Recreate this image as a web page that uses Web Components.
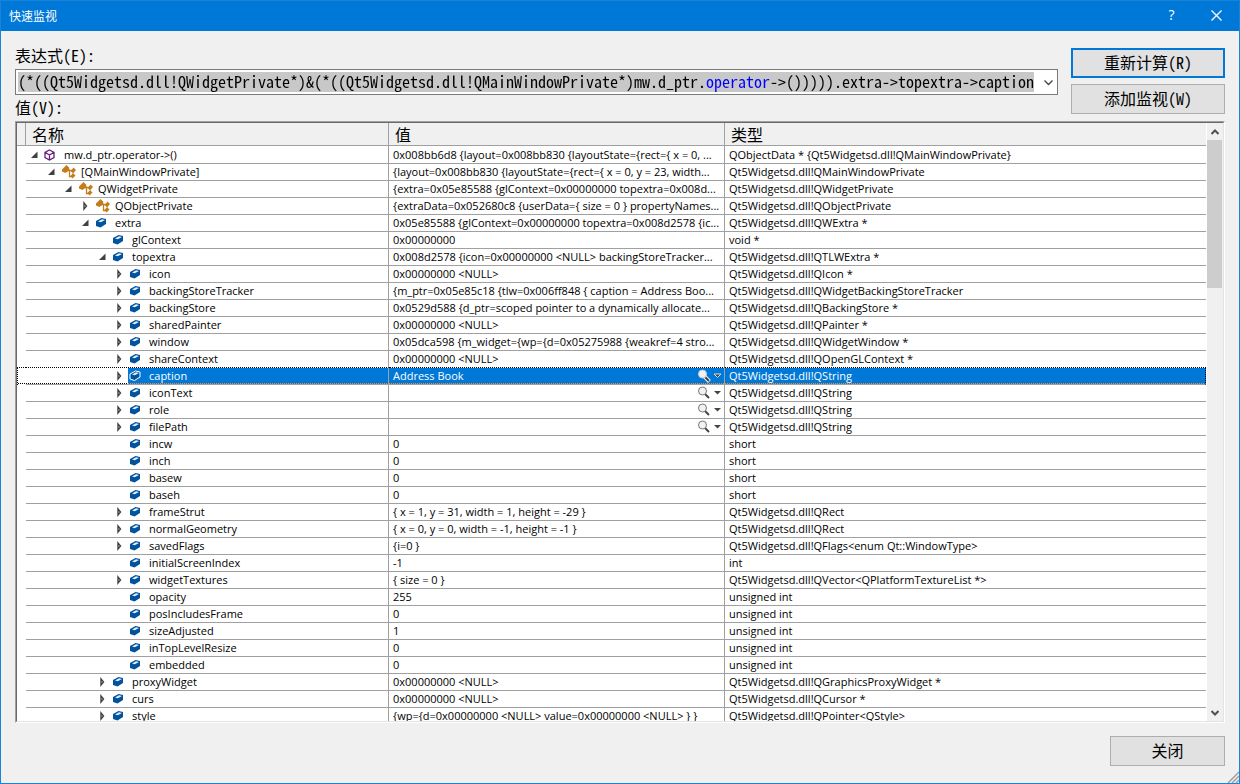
<!DOCTYPE html>
<html lang="zh-CN">
<head>
<meta charset="utf-8">
<title>快速监视</title>
<style>
    body {
        margin: 0;
        font: 16px/20px "Noto Sans Mono CJK SC", "Noto Sans CJK SC", monospace;
        color: #000;
    }
</style>
</head>
<body>
<watch-dialog></watch-dialog>
<script>
const ROWS = [
    // level, expander (open / closed / none), icon, name, value, type, has visualizer
    [0, 'open', 'object', 'mw.d_ptr.operator->()', '0x008bb6d8 {layout=0x008bb830 {layoutState={rect={ x = 0, ...', 'QObjectData * {Qt5Widgetsd.dll!QMainWindowPrivate}'],
    [1, 'open', 'class', '[QMainWindowPrivate]', '{layout=0x008bb830 {layoutState={rect={ x = 0, y = 23, width...', 'Qt5Widgetsd.dll!QMainWindowPrivate'],
    [2, 'open', 'class', 'QWidgetPrivate', '{extra=0x05e85588 {glContext=0x00000000 topextra=0x008d...', 'Qt5Widgetsd.dll!QWidgetPrivate'],
    [3, 'closed', 'class', 'QObjectPrivate', '{extraData=0x052680c8 {userData={ size = 0 } propertyNames...', 'Qt5Widgetsd.dll!QObjectPrivate'],
    [3, 'open', 'field', 'extra', '0x05e85588 {glContext=0x00000000 topextra=0x008d2578 {ic...', 'Qt5Widgetsd.dll!QWExtra *'],
    [4, '', 'field', 'glContext', '0x00000000', 'void *'],
    [4, 'open', 'field', 'topextra', '0x008d2578 {icon=0x00000000 <NULL> backingStoreTracker...', 'Qt5Widgetsd.dll!QTLWExtra *'],
    [5, 'closed', 'field', 'icon', '0x00000000 <NULL>', 'Qt5Widgetsd.dll!QIcon *'],
    [5, 'closed', 'field', 'backingStoreTracker', '{m_ptr=0x05e85c18 {tlw=0x006ff848 { caption = Address Boo...', 'Qt5Widgetsd.dll!QWidgetBackingStoreTracker'],
    [5, 'closed', 'field', 'backingStore', '0x0529d588 {d_ptr=scoped pointer to a dynamically allocate...', 'Qt5Widgetsd.dll!QBackingStore *'],
    [5, 'closed', 'field', 'sharedPainter', '0x00000000 <NULL>', 'Qt5Widgetsd.dll!QPainter *'],
    [5, 'closed', 'field', 'window', '0x05dca598 {m_widget={wp={d=0x05275988 {weakref=4 stro...', 'Qt5Widgetsd.dll!QWidgetWindow *'],
    [5, 'closed', 'field', 'shareContext', '0x00000000 <NULL>', 'Qt5Widgetsd.dll!QOpenGLContext *'],
    [5, 'closed', 'field', 'caption', 'Address Book', 'Qt5Widgetsd.dll!QString', true],
    [5, 'closed', 'field', 'iconText', '', 'Qt5Widgetsd.dll!QString', true],
    [5, 'closed', 'field', 'role', '', 'Qt5Widgetsd.dll!QString', true],
    [5, 'closed', 'field', 'filePath', '', 'Qt5Widgetsd.dll!QString', true],
    [5, '', 'field', 'incw', '0', 'short'],
    [5, '', 'field', 'inch', '0', 'short'],
    [5, '', 'field', 'basew', '0', 'short'],
    [5, '', 'field', 'baseh', '0', 'short'],
    [5, 'closed', 'field', 'frameStrut', '{ x = 1, y = 31, width = 1, height = -29 }', 'Qt5Widgetsd.dll!QRect'],
    [5, 'closed', 'field', 'normalGeometry', '{ x = 0, y = 0, width = -1, height = -1 }', 'Qt5Widgetsd.dll!QRect'],
    [5, 'closed', 'field', 'savedFlags', '{i=0 }', 'Qt5Widgetsd.dll!QFlags<enum Qt::WindowType>'],
    [5, '', 'field', 'initialScreenIndex', '-1', 'int'],
    [5, 'closed', 'field', 'widgetTextures', '{ size = 0 }', 'Qt5Widgetsd.dll!QVector<QPlatformTextureList *>'],
    [5, '', 'field', 'opacity', '255', 'unsigned int'],
    [5, '', 'field', 'posIncludesFrame', '0', 'unsigned int'],
    [5, '', 'field', 'sizeAdjusted', '1', 'unsigned int'],
    [5, '', 'field', 'inTopLevelResize', '0', 'unsigned int'],
    [5, '', 'field', 'embedded', '0', 'unsigned int'],
    [4, 'closed', 'field', 'proxyWidget', '0x00000000 <NULL>', 'Qt5Widgetsd.dll!QGraphicsProxyWidget *'],
    [4, 'closed', 'field', 'curs', '0x00000000 <NULL>', 'Qt5Widgetsd.dll!QCursor *'],
    [4, 'closed', 'field', 'style', '{wp={d=0x00000000 <NULL> value=0x00000000 <NULL> } }', 'Qt5Widgetsd.dll!QPointer<QStyle>']
];
const SELECTED = 'caption';

const ICONS = {
    object: '<path d="M6.500 3 11 5.300v5.200l-4.500 2.500L2 10.500V5.300z M2 5.300l4.500 2.700L11 5.300 M6.500 8v5" fill="none" stroke="#68217a" stroke-width="1.300"/>',
    class: '<path d="M2 5.500 6.500 1 9 3.500 9.500 6 5.500 9 2 7.500z" fill="#c27d1a"/><path d="M7 6.500h5 M9.500 6.500v6h3" fill="none" stroke="#c27d1a" stroke-width="1.300"/><path d="M13.500 3.500 16 6l-3 3.500L10.800 7z M13 9l2.500 2.500-3 3L10.500 12z" fill="#c27d1a"/>',
    field: '<path class="edge" d="M2 6 7.500 3 12 4v5l-5.500 3.500L2 11z" fill="#00539c"/><path d="M4 6.500 8 4.200l3 .8-4.200 2.300z" fill="#e6eef6"/>',
    open: '<path d="M10.500 4.500v6.500H4z" fill="#404040"/>',
    closed: '<path d="M6 5v6l2.500-3z" fill="#fff" stroke="#404040" stroke-width="1.400"/>',
    search: '<path class="halo" d="M7.500 8.500l5 5" stroke="none" stroke-width="4"/><path d="M7.500 8.500l4.500 4.500" stroke="#444" stroke-width="2"/><circle class="lens" cx="5.500" cy="6" r="4" fill="#f2f2f2" stroke="#777"/>',
    drop: '<path class="arrow" d="M1 6h7L4.500 9.500z" fill="#444"/>'
};

class WatchIcon extends HTMLElement {
    constructor() {
        super();
        this.attachShadow({ mode: 'open' });
    }

    connectedCallback() {
        const name = this.getAttribute('name');
        const width = name === 'drop' ? 9 : 16;
        this.shadowRoot.innerHTML = `
            <style>
                :host { display: block; flex: none; height: 16px; white-space: normal; }
                svg { display: block; }
                :host([selected]) .edge { stroke: #fff; }
                :host([selected]) .arrow { stroke: #ddd; }
                :host([selected]) .halo { stroke: #f2f2f2; }
                :host([selected]) .lens { stroke: #ccc; }
            </style>
            <svg width="${width}" height="16" viewBox="0 0 ${width} 16" aria-hidden="true">${ICONS[name]}</svg>
        `;
    }
}

class TitleBar extends HTMLElement {
    constructor() {
        super();
        this.attachShadow({ mode: 'open' }).innerHTML = `
            <style>
                :host {
                    display: flex;
                    align-items: center;
                    height: 30px;
                    padding-left: 8px;
                    background: #0078d7;
                    color: #fff;
                    font: 12px/16px "Noto Sans CJK SC", sans-serif;
                }
                h1 { flex: 1; margin: 0; font: inherit; }
                button {
                    display: flex;
                    align-items: center;
                    justify-content: center;
                    width: 45px;
                    height: 30px;
                    padding: 0 0 2px;
                    border: 0;
                    background: none;
                    color: inherit;
                    font: 14px/16px "Open Sans", sans-serif;
                }
            </style>
            <h1><slot></slot></h1>
            <button>?</button>
            <button aria-label="关闭">
                <svg width="11" height="11" viewBox="0 0 11 11"><path d="M.5.5l10 10M10.500.5l-10 10" stroke="#fff" stroke-width="1.300" fill="none"/></svg>
            </button>
        `;
    }
}

class DialogButton extends HTMLElement {
    constructor() {
        super();
        this.attachShadow({ mode: 'open' }).innerHTML = `
            <style>
                :host { display: block; }
                button {
                    display: block;
                    width: 100%;
                    height: 30px;
                    padding: 0 0 2px;
                    border: 1px solid #adadad;
                    background: #e1e1e1;
                    color: inherit;
                    font: inherit;
                }
                :host([default]) button { border: 2px solid #0078d7; }
            </style>
            <button><slot></slot></button>
        `;
    }
}

class ExpressionBox extends HTMLElement {
    constructor() {
        super();
        this.attachShadow({ mode: 'open' });
    }

    connectedCallback() {
        const value = this.getAttribute('value');
        const start = value.indexOf('operator');
        // the keyword is coloured by a gradient that is clipped to the text
        this.shadowRoot.innerHTML = `
            <style>
                :host { display: flex; flex-direction: column; gap: 4px; }
                .box {
                    display: flex;
                    height: 24px;
                    border: 1px solid #7a7a7a;
                    background: #fff;
                }
                input {
                    flex: 1;
                    min-width: 0;
                    margin: 2px 0 2px 2px;
                    padding: 0 0 2px;
                    border: 0;
                    outline: 0;
                    color: #000;
                    font: inherit;
                    line-height: 18px;
                    -webkit-text-fill-color: transparent;
                    background:
                        linear-gradient(90deg, #000 ${start}ch, #00f ${start}ch ${start + 8}ch, #000 ${start + 8}ch) text,
                        linear-gradient(#c8c8c8, #c8c8c8) 0 0 / ${value.length}ch 100% no-repeat;
                }
                button {
                    display: flex;
                    align-items: center;
                    justify-content: center;
                    width: 17px;
                    padding: 2px 0 0;
                    border: 0;
                    background: none;
                }
            </style>
            <label for="expr"><slot></slot></label>
            <div class="box">
                <input id="expr" type="text" spellcheck="false">
                <button aria-label="历史记录">
                    <svg width="9" height="6" viewBox="0 0 9 6"><path d="M.5.5l4 4 4-4" stroke="#444" stroke-width="1.300" fill="none"/></svg>
                </button>
            </div>
        `;
        this.shadowRoot.querySelector('input').value = value;
    }
}

class GridScrollbar extends HTMLElement {
    constructor() {
        super();
        this.attachShadow({ mode: 'open' }).innerHTML = `
            <style>
                :host {
                    display: flex;
                    flex-direction: column;
                    width: 16px;
                    background: #f0f0f0;
                }
                button {
                    display: flex;
                    align-items: center;
                    justify-content: center;
                    height: 17px;
                    width: 15px;
                    padding: 0;
                    border: 0;
                    background: none;
                }
                .track { flex: 1; }
                .thumb { width: 15px; height: 148px; background: #cdcdcd; }
            </style>
            <button aria-label="向上">
                <svg width="8" height="6" viewBox="0 0 8 6"><path d="M.5 5 4 1.500 7.500 5" stroke="#505050" stroke-width="2" fill="none"/></svg>
            </button>
            <div class="track"><div class="thumb"></div></div>
            <button aria-label="向下">
                <svg width="8" height="6" viewBox="0 0 8 6"><path d="M.5 1 4 4.500 7.500 1" stroke="#505050" stroke-width="2" fill="none"/></svg>
            </button>
        `;
    }
}

class WatchGrid extends HTMLElement {
    constructor() {
        super();
        this.attachShadow({ mode: 'open' });
    }

    escape(text) {
        return text.replace(/&/g, '&amp;').replace(/</g, '&lt;').replace(/>/g, '&gt;');
    }

    row([level, state, icon, name, value, type, visualizer]) {
        const sel = name === SELECTED ? 'selected' : '';
        const expander = state
            ? `<button aria-label="${state === 'open' ? '折叠' : '展开'}"><watch-icon name="${state}"></watch-icon></button>`
            : '';
        const tools = visualizer
            ? `<button aria-label="查看"><watch-icon name="search" ${sel}></watch-icon></button><button aria-label="选项"><watch-icon name="drop" ${sel}></watch-icon></button>`
            : '';
        return `
            <tr class="${sel}">
                <td class="gutter"></td>
                <td class="name"><div class="cell">
                    <span class="tree" style="--level: ${level}">${expander}</span>
                    <span class="label"><watch-icon name="${icon}" ${sel}></watch-icon>${this.escape(name)}</span>
                </div></td>
                <td class="value"><div class="cell"><span class="text">${this.escape(value)}</span>${tools}</div></td>
                <td class="type"><div class="cell"><span class="text">${this.escape(type)}</span></div></td>
            </tr>`;
    }

    connectedCallback() {
        this.shadowRoot.innerHTML = `
            <style>
                :host {
                    display: block;
                    min-height: 0;
                    border: 1px solid #a0a0a0;
                    border-color: #a0a0a0 #fff #fff #a0a0a0;
                }
                .frame {
                    display: flex;
                    gap: 1px;
                    box-sizing: border-box;
                    height: 100%;
                    border: 1px solid;
                    border-color: #696969 #e3e3e3 #e3e3e3 #696969;
                    background: #fff;
                }
                .view { flex: 1; min-width: 0; overflow: hidden; }
                table {
                    width: 100%;
                    table-layout: fixed;
                    border-collapse: separate;
                    border-spacing: 0;
                }
                th, td { padding: 0; }
                th {
                    box-sizing: border-box;
                    height: 23px;
                    padding-left: 6px;
                    border-right: 1px solid #a0a0a0;
                    border-bottom: 1px solid #a0a0a0;
                    background: #f0f0f0;
                    font-weight: normal;
                    line-height: 22px;
                    text-align: left;
                }
                th:last-child { border-right: 0; }
                .c-gutter { width: 9px; }
                .c-name { width: 363px; }
                .c-value { width: 336px; }
                td { --dot: #000; }
                td:not(.gutter) { border-bottom: 1px solid #a0a0a0; }
                .name, .value { border-right: 1px solid #a0a0a0; }
                tbody tr:first-child .cell { padding-top: 1px; }
                .cell {
                    display: flex;
                    height: 16px;
                    font: 11px/16px "Open Sans", sans-serif;
                    white-space: pre;
                }
                .tree {
                    display: flex;
                    flex: none;
                    justify-content: flex-end;
                    width: calc(var(--level) * 17px + 17px);
                }
                .label { display: flex; flex: 1; gap: 5px; }
                .text { flex: 1; min-width: 0; padding-left: 4px; overflow: hidden; }
                button {
                    flex: none;
                    padding: 0;
                    border: 0;
                    background: none;
                }
                .value button:last-child { margin: 0 2px 0 0; }
                .selected .label, .selected .value, .selected .type {
                    --dot: #ff8728;
                    background-color: #0078d7;
                    color: #fff;
                }
                .selected .gutter, .selected .tree, .selected .label, .selected .value, .selected .type {
                    background-image: repeating-linear-gradient(90deg, var(--dot) 0 1px, transparent 1px 2px);
                    background-repeat: no-repeat;
                    background-position: 0 15px;
                    background-size: 100% 1px;
                }
                .selected .gutter { border-left: 1px dotted #000; }
                .selected .type { border-right: 1px dotted #000; }
                tr:has(+ .selected) td { border-bottom: 1px dotted #000; }
            </style>
            <div class="frame">
                <div class="view">
                    <table aria-label="值">
                        <colgroup><col class="c-gutter"><col class="c-name"><col class="c-value"><col></colgroup>
                        <thead><tr><th></th><th>名称</th><th>值</th><th>类型</th></tr></thead>
                        <tbody>${ROWS.map(r => this.row(r).replace(/>\s+</g, '><')).join('')}</tbody>
                    </table>
                </div>
                <grid-scrollbar></grid-scrollbar>
            </div>
        `;
    }
}

class WatchDialog extends HTMLElement {
    constructor() {
        super();
        this.attachShadow({ mode: 'open' }).innerHTML = `
            <style>
                :host {
                    display: flex;
                    flex-direction: column;
                    position: relative;
                    box-sizing: border-box;
                    height: 100vh;
                    border: 1px solid #1883d7;
                    background: #f0f0f0;
                }
                main {
                    display: flex;
                    flex: 1;
                    flex-direction: column;
                    gap: 4px;
                    min-height: 0;
                    padding: 14px 14px 17px;
                }
                .top { display: flex; gap: 13px; }
                .fields { display: flex; flex: 1; flex-direction: column; gap: 2px; min-width: 0; }
                .actions { display: flex; flex-direction: column; gap: 6px; width: 154px; padding-top: 3px; }
                watch-grid { flex: 1; }
                footer { display: flex; justify-content: flex-end; padding-top: 9px; }
                footer dialog-button { width: 115px; }
                .grip { position: absolute; right: 0; bottom: 0; }
            </style>
            <title-bar>快速监视</title-bar>
            <main>
                <div class="top">
                    <div class="fields">
                        <expression-box value="(*((Qt5Widgetsd.dll!QWidgetPrivate*)&amp;(*((Qt5Widgetsd.dll!QMainWindowPrivate*)mw.d_ptr.operator->())))).extra->topextra->caption">表达式(E):</expression-box>
                        <div>值(V):</div>
                    </div>
                    <div class="actions">
                        <dialog-button default>重新计算(R)</dialog-button>
                        <dialog-button>添加监视(W)</dialog-button>
                    </div>
                </div>
                <watch-grid></watch-grid>
                <footer><dialog-button>关闭</dialog-button></footer>
            </main>
            <svg class="grip" width="12" height="12" viewBox="0 0 12 12" aria-hidden="true">
                <path d="M1 12 12 1M5 12l7-7M9 12l3-3" stroke="#a0a0a0" stroke-width="1.500" fill="none"/>
            </svg>
        `;
    }
}

customElements.define('watch-icon', WatchIcon);
customElements.define('title-bar', TitleBar);
customElements.define('dialog-button', DialogButton);
customElements.define('expression-box', ExpressionBox);
customElements.define('grid-scrollbar', GridScrollbar);
customElements.define('watch-grid', WatchGrid);
customElements.define('watch-dialog', WatchDialog);
</script>
</body>
</html>
